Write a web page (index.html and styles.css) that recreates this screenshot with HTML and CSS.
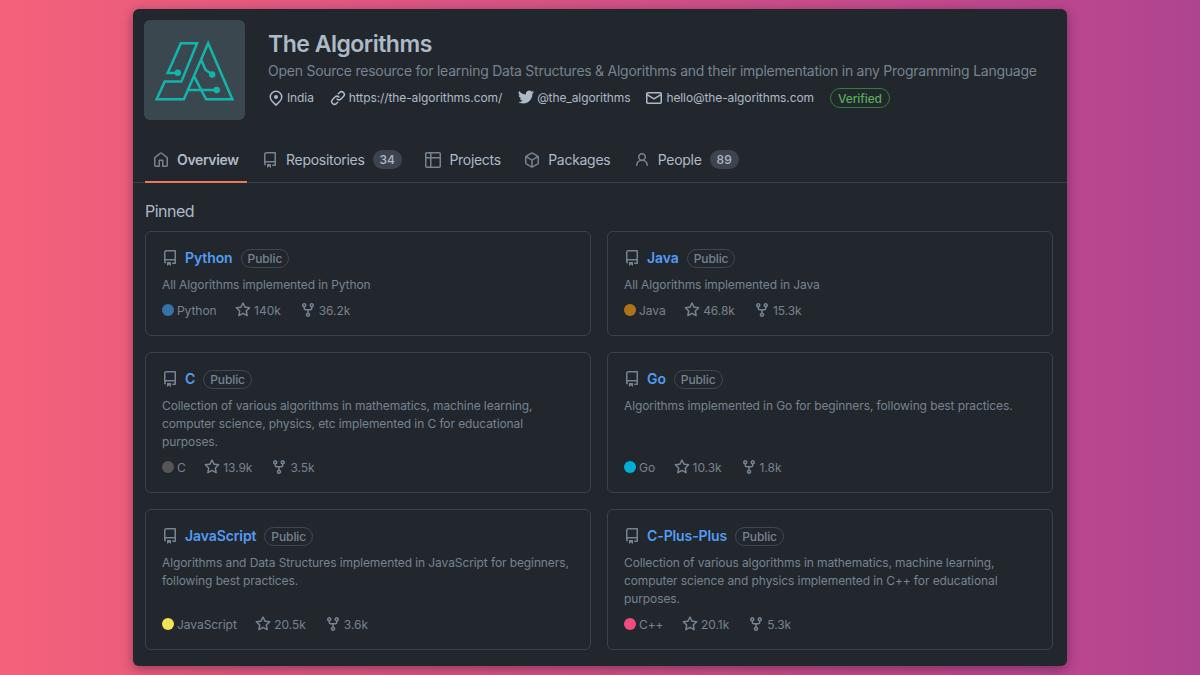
FILE: index.html
```html
<!DOCTYPE html>
<html lang="en">
<head>
    <meta charset="UTF-8">
    <meta name="viewport" content="width=device-width, initial-scale=1.0">
    <title>The Algorithms</title>
    <link rel="stylesheet" href="styles.css">
</head>
<body>
    <!-- Icon sprite -->
    <svg class="sprite">
        <symbol id="location" viewBox="0 0 16 16"><path fill-rule="evenodd" d="M11.536 3.464a5 5 0 010 7.072L8 14.07l-3.536-3.535a5 5 0 117.072-7.072v.001zm1.06 8.132a6.5 6.5 0 10-9.192 0l3.535 3.536a1.5 1.5 0 002.122 0l3.535-3.536zM8 9a2 2 0 100-4 2 2 0 000 4z"/></symbol>
        <symbol id="link" viewBox="0 0 16 16"><path d="M7.775 3.275a.75.75 0 001.06 1.06l1.25-1.25a2 2 0 112.83 2.83l-2.5 2.5a2 2 0 01-2.83 0 .75.75 0 00-1.06 1.06 3.5 3.5 0 004.95 0l2.5-2.5a3.5 3.5 0 00-4.95-4.95l-1.25 1.25zm-4.69 9.64a2 2 0 010-2.83l2.5-2.5a2 2 0 012.83 0 .75.75 0 001.06-1.06 3.5 3.5 0 00-4.95 0l-2.5 2.5a3.5 3.5 0 004.95 4.95l1.25-1.25a.75.75 0 00-1.06-1.06l-1.25 1.25a2 2 0 01-2.83 0z"/></symbol>
        <symbol id="twitter" viewBox="0 0 273.5 222.3"><path d="M273.5 26.3a109.77 109.77 0 0 1-32.2 8.8 56.07 56.07 0 0 0 24.7-31 113.39 113.39 0 0 1-35.7 13.6 56.1 56.1 0 0 0-97 38.4 54 54 0 0 0 1.5 12.8A159.68 159.68 0 0 1 19.1 10.3a56.12 56.12 0 0 0 17.4 74.9 56.06 56.06 0 0 1-25.4-7v.7a56.11 56.11 0 0 0 45 55 55.65 55.65 0 0 1-14.8 2 62.39 62.39 0 0 1-10.6-1 56.24 56.24 0 0 0 52.4 39 112.87 112.87 0 0 1-69.7 24 119 119 0 0 1-13.4-.8 158.83 158.83 0 0 0 86 25.2c103.2 0 159.6-85.5 159.6-159.6 0-2.4-.1-4.9-.2-7.3a114.25 114.25 0 0 0 28.1-29.1"/></symbol>
        <symbol id="mail" viewBox="0 0 16 16"><path fill-rule="evenodd" d="M1.75 2A1.75 1.75 0 000 3.75v.736a.75.75 0 000 .027v7.737C0 13.216.784 14 1.75 14h12.5A1.75 1.75 0 0016 12.25v-8.5A1.75 1.75 0 0014.25 2H1.75zM14.5 4.07v-.32a.25.25 0 00-.25-.25H1.75a.25.25 0 00-.25.25v.32L8 7.88l6.5-3.81zm-13 1.74v6.441c0 .138.112.25.25.25h12.5a.25.25 0 00.25-.25V5.809L8.38 9.397a.75.75 0 01-.76 0L1.5 5.809z"/></symbol>
        <symbol id="home" viewBox="0 0 16 16"><path fill-rule="evenodd" d="M8.156 1.835a.25.25 0 00-.312 0l-5.25 4.2a.25.25 0 00-.094.196v7.019c0 .138.112.25.25.25H5.5V8.25a.75.75 0 01.75-.75h3.5a.75.75 0 01.75.75v5.25h2.75a.25.25 0 00.25-.25V6.23a.25.25 0 00-.094-.195l-5.25-4.2zM6.906.664a1.75 1.75 0 012.187 0l5.25 4.2c.415.332.657.835.657 1.367v7.019A1.75 1.75 0 0113.25 15h-3.5a.75.75 0 01-.75-.75V9H7v5.25a.75.75 0 01-.75.75h-3.5A1.75 1.75 0 011 13.25V6.23c0-.531.242-1.034.657-1.366l5.25-4.2h-.001z"/></symbol>
        <symbol id="repo" viewBox="0 0 16 16"><path fill-rule="evenodd" d="M2 2.5A2.5 2.5 0 014.5 0h8.75a.75.75 0 01.75.75v12.5a.75.75 0 01-.75.75h-2.5a.75.75 0 110-1.5h1.75v-2h-8a1 1 0 00-.714 1.7.75.75 0 01-1.072 1.05A2.495 2.495 0 012 11.5v-9zm10.5-1V9h-8c-.356 0-.694.074-1 .208V2.5a1 1 0 011-1h8zM5 12.25v3.25a.25.25 0 00.4.2l1.45-1.087a.25.25 0 01.3 0L8.6 15.7a.25.25 0 00.4-.2v-3.25a.25.25 0 00-.25-.25h-3.5a.25.25 0 00-.25.25z"/></symbol>
        <symbol id="table" viewBox="0 0 16 16"><path fill-rule="evenodd" d="M0 1.75C0 .784.784 0 1.75 0h12.5C15.216 0 16 .784 16 1.75v12.5A1.75 1.75 0 0114.25 16H1.75A1.75 1.75 0 010 14.25V1.75zM1.5 6.5v7.75c0 .138.112.25.25.25H5v-8H1.5zM5 5H1.5V1.75a.25.25 0 01.25-.25H5V5zm1.5 1.5v8h7.75a.25.25 0 00.25-.25V6.5h-8zM14.5 5h-8V1.5h7.75a.25.25 0 01.25.25V5z"/></symbol>
        <symbol id="package" viewBox="0 0 16 16"><path fill-rule="evenodd" d="M8.878.392a1.75 1.75 0 00-1.756 0l-5.25 3.045A1.75 1.75 0 001 4.951v6.098c0 .624.332 1.2.872 1.514l5.25 3.045a1.75 1.75 0 001.756 0l5.25-3.045c.54-.313.872-.89.872-1.514V4.951c0-.624-.332-1.2-.872-1.514L8.878.392zM7.875 1.69a.25.25 0 01.25 0l4.63 2.685L8 7.133 3.245 4.375l4.63-2.685zM2.5 5.677v5.372c0 .09.047.171.125.216l4.625 2.683V8.432L2.5 5.677zm6.25 8.271l4.625-2.683a.25.25 0 00.125-.216V5.677L8.75 8.432v5.516z"/></symbol>
        <symbol id="person" viewBox="0 0 16 16"><path fill-rule="evenodd" d="M10.5 5a2.5 2.5 0 11-5 0 2.5 2.5 0 015 0zm.061 3.073a4 4 0 10-5.123 0 6.004 6.004 0 00-3.431 5.142.75.75 0 001.498.07 4.5 4.5 0 018.99 0 .75.75 0 101.498-.07 6.005 6.005 0 00-3.432-5.142z"/></symbol>
        <symbol id="star" viewBox="0 0 16 16"><path fill-rule="evenodd" d="M8 .25a.75.75 0 01.673.418l1.882 3.815 4.21.612a.75.75 0 01.416 1.279l-3.046 2.97.719 4.192a.75.75 0 01-1.088.791L8 12.347l-3.766 1.98a.75.75 0 01-1.088-.79l.72-4.194L.818 6.374a.75.75 0 01.416-1.28l4.21-.611L7.327.668A.75.75 0 018 .25zm0 2.445L6.615 5.5a.75.75 0 01-.564.41l-3.097.45 2.24 2.184a.75.75 0 01.216.664l-.528 3.084 2.769-1.456a.75.75 0 01.698 0l2.77 1.456-.53-3.084a.75.75 0 01.216-.664l2.24-2.183-3.096-.45a.75.75 0 01-.564-.41L8 2.694v.001z"/></symbol>
        <symbol id="fork" viewBox="0 0 16 16"><path fill-rule="evenodd" d="M5 3.25a.75.75 0 11-1.5 0 .75.75 0 011.5 0zm0 2.122a2.25 2.25 0 10-1.5 0v.878A2.25 2.25 0 005.75 8.5h1.5v2.128a2.251 2.251 0 101.5 0V8.5h1.5a2.25 2.25 0 002.25-2.25v-.878a2.25 2.25 0 10-1.5 0v.878a.75.75 0 01-.75.75h-4.5A.75.75 0 015 6.25v-.878zm3.75 7.378a.75.75 0 11-1.5 0 .75.75 0 011.5 0zm3-8.75a.75.75 0 100-1.5.75.75 0 000 1.5z"/></symbol>
    </svg>

    <div class="panel">
        <header class="org">
            <div class="avatar">
                <svg viewBox="0 0 100 100">
                    <g fill="none" stroke="#12b5ab" stroke-width="2.5">
                        <path d="M33 52.5H23.5L36.5 23H52.5L37 61H20.5L12.5 78.5H39.5L63.5 23L87.5 78.5H61.5L49.5 55.5"/>
                        <path d="M56.5 39L61 49.5L67 53.5M44 69.3H71"/>
                    </g>
                    <g fill="#12b5ab">
                        <circle cx="33.5" cy="52.3" r="3.2"/>
                        <circle cx="67.5" cy="54" r="3.2"/>
                        <circle cx="72" cy="69.3" r="3.2"/>
                    </g>
                </svg>
            </div>
            <div class="org-info">
                <h1>The Algorithms</h1>
                <p class="bio">Open Source resource for learning Data Structures &amp; Algorithms and their implementation in any Programming Language</p>
                <ul class="contact">
                    <li><svg class="icon"><use href="#location"/></svg><span>India</span></li>
                    <li><svg class="icon"><use href="#link"/></svg><span>https://the-algorithms.com/</span></li>
                    <li><svg class="icon bird"><use href="#twitter"/></svg><span>@the_algorithms</span></li>
                    <li><svg class="icon mail"><use href="#mail"/></svg><span>hello@the-algorithms.com</span></li>
                    <li class="verified">Verified</li>
                </ul>
            </div>
        </header>

        <nav class="tabs">
            <a class="tab active"><svg class="icon"><use href="#home"/></svg><span>Overview</span></a>
            <a class="tab"><svg class="icon"><use href="#repo"/></svg><span>Repositories</span><b class="counter">34</b></a>
            <a class="tab"><svg class="icon"><use href="#table"/></svg><span>Projects</span></a>
            <a class="tab"><svg class="icon"><use href="#package"/></svg><span>Packages</span></a>
            <a class="tab"><svg class="icon"><use href="#person"/></svg><span>People</span><b class="counter">89</b></a>
        </nav>

        <main>
            <h2>Pinned</h2>
            <div class="pinned">
                <div class="card">
                    <div class="card-title"><svg class="icon"><use href="#repo"/></svg><a>Python</a><span class="label">Public</span></div>
                    <p>All Algorithms implemented in Python</p>
                    <div class="meta">
                        <span class="lang"><i class="dot python"></i>Python</span>
                        <span class="stat"><svg class="icon"><use href="#star"/></svg>140k</span>
                        <span class="stat"><svg class="icon"><use href="#fork"/></svg>36.2k</span>
                    </div>
                </div>
                <div class="card">
                    <div class="card-title"><svg class="icon"><use href="#repo"/></svg><a>Java</a><span class="label">Public</span></div>
                    <p>All Algorithms implemented in Java</p>
                    <div class="meta">
                        <span class="lang"><i class="dot java"></i>Java</span>
                        <span class="stat"><svg class="icon"><use href="#star"/></svg>46.8k</span>
                        <span class="stat"><svg class="icon"><use href="#fork"/></svg>15.3k</span>
                    </div>
                </div>
                <div class="card">
                    <div class="card-title"><svg class="icon"><use href="#repo"/></svg><a>C</a><span class="label">Public</span></div>
                    <p>Collection of various algorithms in mathematics, machine learning,<br>computer science, physics, etc implemented in C for educational<br>purposes.</p>
                    <div class="meta">
                        <span class="lang"><i class="dot c"></i>C</span>
                        <span class="stat"><svg class="icon"><use href="#star"/></svg>13.9k</span>
                        <span class="stat"><svg class="icon"><use href="#fork"/></svg>3.5k</span>
                    </div>
                </div>
                <div class="card">
                    <div class="card-title"><svg class="icon"><use href="#repo"/></svg><a>Go</a><span class="label">Public</span></div>
                    <p>Algorithms implemented in Go for beginners, following best practices.</p>
                    <div class="meta">
                        <span class="lang"><i class="dot go"></i>Go</span>
                        <span class="stat"><svg class="icon"><use href="#star"/></svg>10.3k</span>
                        <span class="stat"><svg class="icon"><use href="#fork"/></svg>1.8k</span>
                    </div>
                </div>
                <div class="card">
                    <div class="card-title"><svg class="icon"><use href="#repo"/></svg><a>JavaScript</a><span class="label">Public</span></div>
                    <p>Algorithms and Data Structures implemented in JavaScript for beginners,<br>following best practices.</p>
                    <div class="meta">
                        <span class="lang"><i class="dot js"></i>JavaScript</span>
                        <span class="stat"><svg class="icon"><use href="#star"/></svg>20.5k</span>
                        <span class="stat"><svg class="icon"><use href="#fork"/></svg>3.6k</span>
                    </div>
                </div>
                <div class="card">
                    <div class="card-title"><svg class="icon"><use href="#repo"/></svg><a>C-Plus-Plus</a><span class="label">Public</span></div>
                    <p>Collection of various algorithms in mathematics, machine learning,<br>computer science and physics implemented in C++ for educational<br>purposes.</p>
                    <div class="meta">
                        <span class="lang"><i class="dot cpp"></i>C++</span>
                        <span class="stat"><svg class="icon"><use href="#star"/></svg>20.1k</span>
                        <span class="stat"><svg class="icon"><use href="#fork"/></svg>5.3k</span>
                    </div>
                </div>
            </div>
        </main>
    </div>
</body>
</html>
```
FILE: styles.css
```css
* {
    box-sizing: border-box;
}
body {
    margin: 0;
    height: 675px;
    padding: 9px 133px;
    overflow: hidden;
    font-family: Inter, 'Noto Sans', sans-serif;
    font-size: 12px;
    letter-spacing: -0.1px;
    color: #adbac7;
    background: linear-gradient(to right, #f4617a, #b8468f 92%, #ae4490);
}
h1, h2, p, ul {
    margin: 0;
    padding: 0;
    font-weight: 400;
}
.sprite {
    display: none;
}
.icon {
    display: block;
    flex: none;
    width: 16px;
    height: 16px;
    fill: currentColor;
}
.panel {
    width: 934px;
    height: 657px;
    background: #22272d;
    border-radius: 6px;
    box-shadow: 0 3px 12px rgba(40, 20, 50, 0.45);
}

/* Header */
.org {
    display: flex;
    height: 127px;
    padding: 11px 11px 0;
}
.avatar {
    flex: none;
    width: 101px;
    height: 100px;
    border-radius: 6px;
    background: #3b474f;
}
.avatar svg {
    display: block;
    width: 101px;
    height: 101px;
}
.org-info {
    padding: 9px 0 0 23px;
    white-space: nowrap;
}
h1 {
    font-size: 23px;
    line-height: 30px;
    font-weight: 600;
    letter-spacing: -0.5px;
}
.bio {
    margin-top: 1px;
    font-size: 14px;
    line-height: 22px;
    letter-spacing: -0.25px;
    color: #768390;
}
.contact {
    display: flex;
    align-items: center;
    height: 20px;
    margin-top: 6px;
    gap: 16px;
    list-style: none;
}
.contact li {
    display: flex;
    align-items: center;
    gap: 3px;
}
.contact span {
    padding-bottom: 1px;
}
.contact .bird {
    margin-bottom: 2px;
}
.contact .mail {
    margin-right: 1px;
}
.contact .verified {
    height: 20px;
    padding: 0 7px;
    border: 1px solid #347d39;
    border-radius: 10px;
    color: #57ab5a;
    font-weight: 500;
}

/* Tabs */
.tabs {
    display: flex;
    height: 47px;
    padding-left: 12px;
    gap: 7.4px;
    border-bottom: 1px solid #373e47;
    font-size: 14px;
    letter-spacing: -0.29px;
    white-space: nowrap;
}
.tab {
    display: flex;
    align-items: center;
    height: 47px;
    gap: 8px;
    padding: 0 8px;
}
.tab .icon {
    color: #768390;
}
.tab.active {
    padding-top: 2px;
    font-weight: 600;
    letter-spacing: -0.35px;
    border-bottom: 2px solid #ec775c;
}
.counter {
    height: 19px;
    padding: 0 7px;
    border-radius: 10px;
    background: #3d444e;
    font-size: 12px;
    line-height: 19px;
    letter-spacing: 0;
    font-weight: 500;
}

/* Pinned repositories */
main {
    padding: 18px 14px 0 12px;
}
h2 {
    font-size: 16px;
    line-height: 20px;
    letter-spacing: -0.5px;
}
.pinned {
    display: grid;
    grid-template-columns: 446px 446px;
    grid-template-rows: 105px 141px 141px;
    gap: 16px;
    margin-top: 10px;
}
.card {
    display: flex;
    flex-direction: column;
    padding: 16px;
    border: 1px solid #3b424b;
    border-radius: 6px;
    color: #768390;
    white-space: nowrap;
}
.card-title {
    display: flex;
    align-items: center;
    height: 20px;
}
.card-title a {
    margin: 0 8px 1px 7px;
    color: #539bf5;
    font-size: 14px;
    font-weight: 600;
}
.label {
    height: 19px;
    padding: 0 6px;
    border: 1px solid #3f4751;
    border-radius: 10px;
    line-height: 18px;
    font-weight: 500;
}
.card p {
    flex: 1;
    margin-top: 8.4px;
    line-height: 17.9px;
}
.meta {
    display: flex;
    align-items: center;
    height: 18px;
    letter-spacing: -0.05px;
}
.lang, .stat {
    display: flex;
    align-items: center;
    gap: 3px;
    margin-right: 19px;
}
.lang {
    margin-right: 18.5px;
}
.dot {
    width: 12px;
    height: 12px;
    border-radius: 50%;
}
.python { background: #3572a5; }
.java { background: #b07219; }
.c { background: #555; }
.go { background: #00add8; }
.js { background: #f1e05a; }
.cpp { background: #f34b7d; }
```
